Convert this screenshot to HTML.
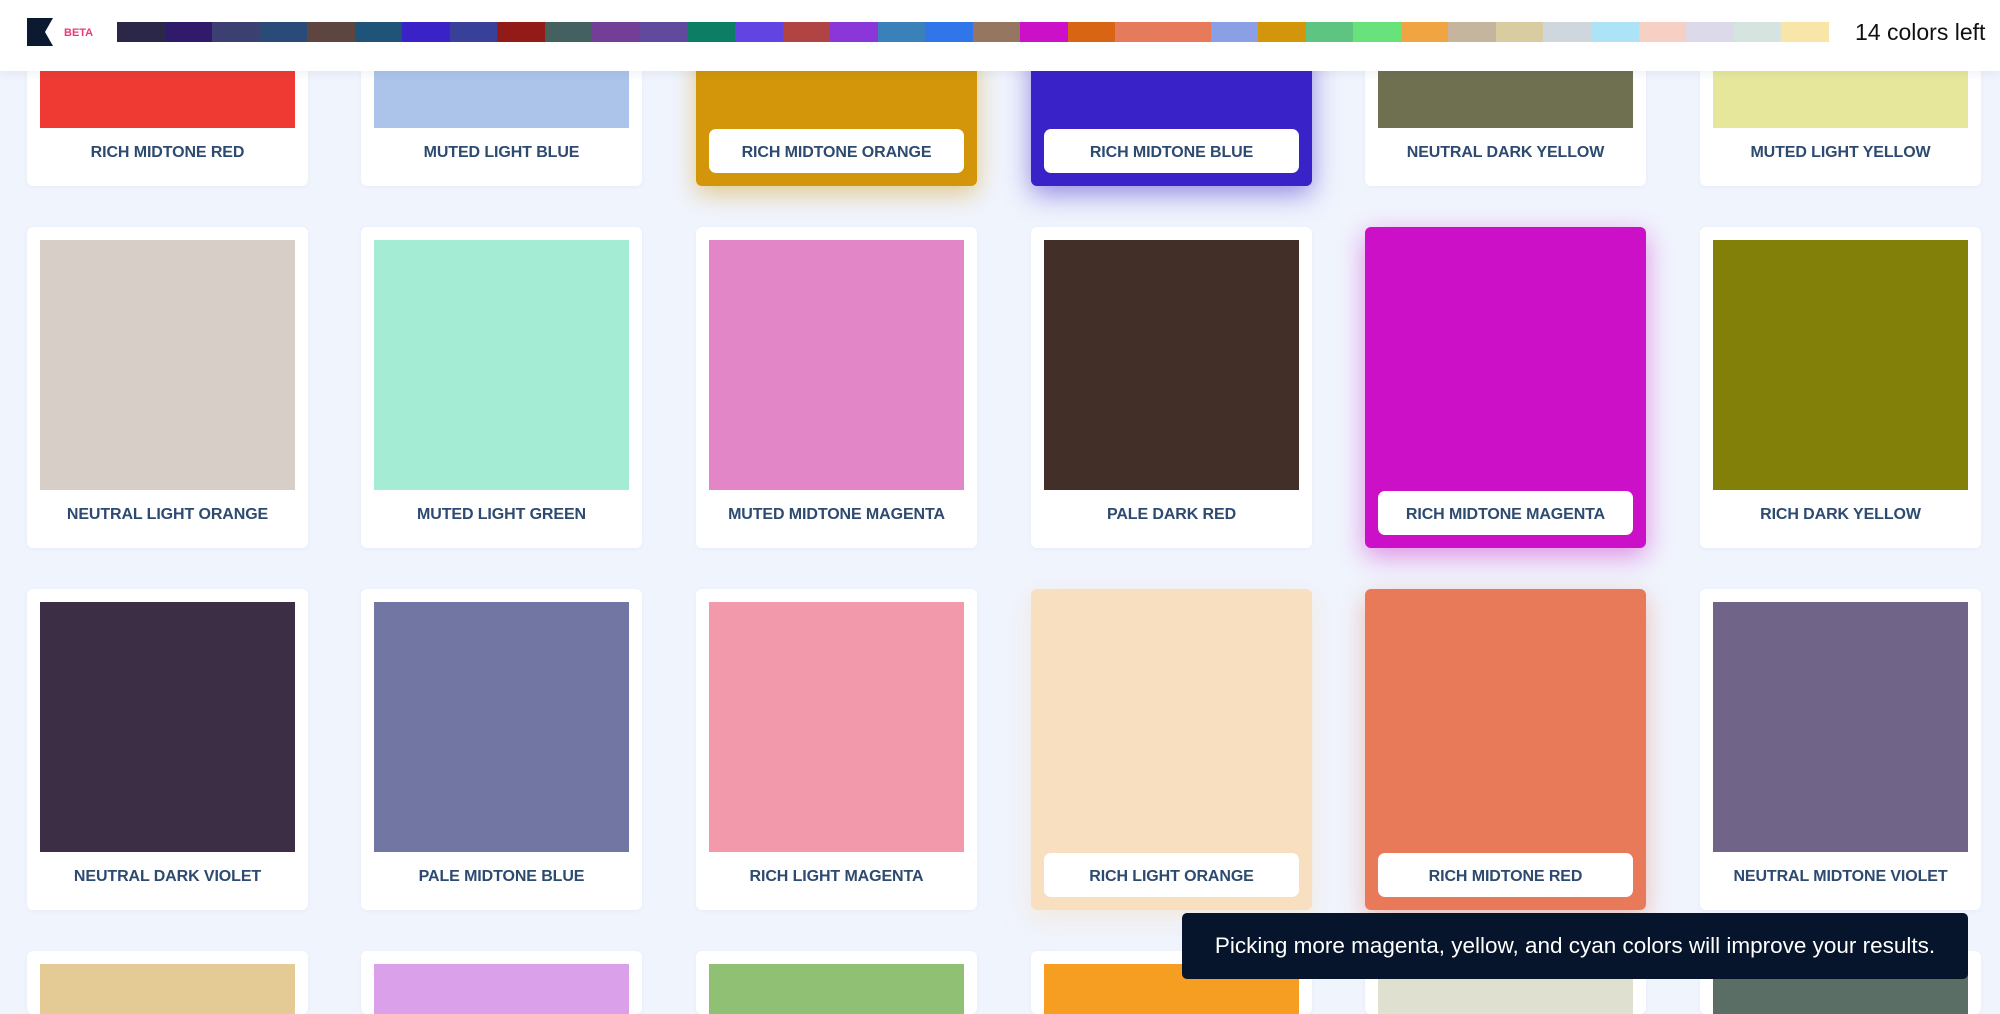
<!DOCTYPE html>
<html><head><meta charset="utf-8"><style>
*{margin:0;padding:0;box-sizing:border-box}
html,body{width:2000px;height:1014px;overflow:hidden;background:#f0f4fd;font-family:"Liberation Sans",sans-serif}
#wrap{position:relative;width:2000px;height:1014px;overflow:hidden}
.hdr{position:absolute;left:0;top:0;width:2000px;height:71px;background:#fff;box-shadow:0 2px 10px rgba(40,60,100,.08);z-index:5}
.strip{position:absolute;left:117px;top:22px;height:20px;display:flex}
.strip i{display:block;width:47.55px;height:20px}
.left{position:absolute;left:1855px;top:19px;font-size:23px;color:#111}
.beta{position:absolute;left:64px;top:27px;font-size:11px;font-weight:bold;color:#ec3a72}
.card{position:absolute;width:281px;height:321px;background:#fff;border-radius:6px;box-shadow:0 1px 4px rgba(60,80,130,.05)}
.sw{position:absolute;left:13px;top:13px;width:255px;height:250px}
.lb{position:absolute;left:0;width:281px;top:279px;text-align:center;font-size:16px;font-weight:bold;color:#2d4a70;letter-spacing:-.1px}
.sel .btn{position:absolute;left:13px;top:264px;width:255px;height:44px;background:#fff;border-radius:7px}
.sel .lb{top:279px}
.toast{position:absolute;left:1182px;top:913px;width:786px;height:66px;background:#06152b;border-radius:5px;color:#fff;font-size:22.5px;line-height:66px;text-align:center;z-index:6}
</style></head><body><div id="wrap">
<div class="hdr">
<svg style="position:absolute;left:27px;top:18px" width="27" height="28"><polygon points="0,0 26,0 18,14 26,28 0,28" fill="#0b1a30"/></svg>
<div class="beta">BETA</div>
<div class="strip">
<i style="background:#2a2748"></i><i style="background:#2f1a6b"></i><i style="background:#3c4070"></i><i style="background:#2a4a78"></i><i style="background:#5e4540"></i><i style="background:#1f5378"></i><i style="background:#3a22c9"></i><i style="background:#38409a"></i><i style="background:#921a17"></i><i style="background:#44605f"></i><i style="background:#733e96"></i><i style="background:#5f4aa0"></i><i style="background:#0b7e64"></i><i style="background:#6244e0"></i><i style="background:#b04442"></i><i style="background:#8a36d9"></i><i style="background:#3a80b9"></i><i style="background:#3075ea"></i><i style="background:#957660"></i><i style="background:#cc10c8"></i><i style="background:#d86514"></i><i style="background:#e67a5c"></i><i style="background:#e87a5c"></i><i style="background:#8a9fe6"></i><i style="background:#d3960a"></i><i style="background:#5ec482"></i><i style="background:#68e27a"></i><i style="background:#f0a542"></i><i style="background:#c6b59e"></i><i style="background:#d9cca0"></i><i style="background:#cfd6dc"></i><i style="background:#aee2f6"></i><i style="background:#f6d0c4"></i><i style="background:#dcdaea"></i><i style="background:#d6e4e0"></i><i style="background:#f8e6a8"></i>
</div>
<div class="left">14 colors left</div>
</div>

<div class="card" style="left:27px;top:-135px"><div class="sw" style="background:#ef3a33"></div><div class="lb">RICH MIDTONE RED</div></div>
<div class="card" style="left:361px;top:-135px"><div class="sw" style="background:#adc4ea"></div><div class="lb">MUTED LIGHT BLUE</div></div>
<div class="card sel" style="left:696px;top:-135px;background:#d3960a;box-shadow:0 8px 24px rgba(211,150,10,.45)"><div class="btn"></div><div class="lb">RICH MIDTONE ORANGE</div></div>
<div class="card sel" style="left:1031px;top:-135px;background:#3a22c9;box-shadow:0 8px 26px rgba(58,34,201,.5)"><div class="btn"></div><div class="lb">RICH MIDTONE BLUE</div></div>
<div class="card" style="left:1365px;top:-135px"><div class="sw" style="background:#6f7050"></div><div class="lb">NEUTRAL DARK YELLOW</div></div>
<div class="card" style="left:1700px;top:-135px"><div class="sw" style="background:#e7e79c"></div><div class="lb">MUTED LIGHT YELLOW</div></div>

<div class="card" style="left:27px;top:227px"><div class="sw" style="background:#d8cec8"></div><div class="lb">NEUTRAL LIGHT ORANGE</div></div>
<div class="card" style="left:361px;top:227px"><div class="sw" style="background:#a4ecd3"></div><div class="lb">MUTED LIGHT GREEN</div></div>
<div class="card" style="left:696px;top:227px"><div class="sw" style="background:#e386c8"></div><div class="lb">MUTED MIDTONE MAGENTA</div></div>
<div class="card" style="left:1031px;top:227px"><div class="sw" style="background:#422f28"></div><div class="lb">PALE DARK RED</div></div>
<div class="card sel" style="left:1365px;top:227px;background:#cc10c8;box-shadow:0 8px 26px rgba(204,16,200,.45)"><div class="btn"></div><div class="lb">RICH MIDTONE MAGENTA</div></div>
<div class="card" style="left:1700px;top:227px"><div class="sw" style="background:#828008"></div><div class="lb">RICH DARK YELLOW</div></div>

<div class="card" style="left:27px;top:589px"><div class="sw" style="background:#3c2e44"></div><div class="lb">NEUTRAL DARK VIOLET</div></div>
<div class="card" style="left:361px;top:589px"><div class="sw" style="background:#7276a2"></div><div class="lb">PALE MIDTONE BLUE</div></div>
<div class="card" style="left:696px;top:589px"><div class="sw" style="background:#f29aab"></div><div class="lb">RICH LIGHT MAGENTA</div></div>
<div class="card sel" style="left:1031px;top:589px;background:#f8dfc0;box-shadow:0 8px 24px rgba(248,223,192,.5)"><div class="btn"></div><div class="lb">RICH LIGHT ORANGE</div></div>
<div class="card sel" style="left:1365px;top:589px;background:#e87a5a;box-shadow:0 8px 24px rgba(232,122,90,.45)"><div class="btn"></div><div class="lb">RICH MIDTONE RED</div></div>
<div class="card" style="left:1700px;top:589px"><div class="sw" style="background:#706589"></div><div class="lb">NEUTRAL MIDTONE VIOLET</div></div>

<div class="card" style="left:27px;top:951px;height:63px"><div class="sw" style="background:#e4ca94"></div></div>
<div class="card" style="left:361px;top:951px;height:63px"><div class="sw" style="background:#daa0ea"></div></div>
<div class="card" style="left:696px;top:951px;height:63px"><div class="sw" style="background:#8fc074"></div></div>
<div class="card" style="left:1031px;top:951px;height:63px"><div class="sw" style="background:#f59e22"></div></div>
<div class="card" style="left:1365px;top:951px;height:63px"><div class="sw" style="background:#dfe0cf"></div></div>
<div class="card" style="left:1700px;top:951px;height:63px"><div class="sw" style="background:#5a6e66"></div></div>

<div class="toast">Picking more magenta, yellow, and cyan colors will improve your results.</div>
</div></body></html>
